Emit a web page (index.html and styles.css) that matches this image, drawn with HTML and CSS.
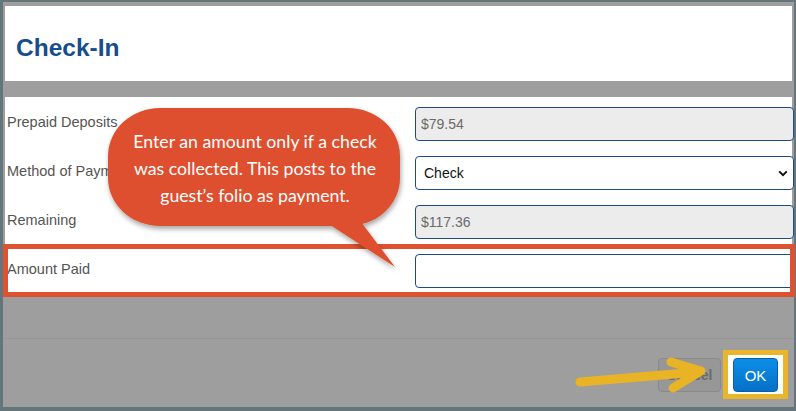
FILE: index.html
```html
<!DOCTYPE html>
<html>
<head>
<meta charset="utf-8">
<link rel="stylesheet" href="styles.css">
</head>
<body>
<div class="frame">
  <div class="header"><h1 class="title">Check-In</h1></div>
  <div class="form">
    <label class="label">Prepaid Deposits</label>
    <input class="field disabled" value="$79.54" disabled>
    <label class="label">Method of Payment</label>
    <div class="select-wrap">
      <select class="field select"><option>Check</option></select>
      <svg class="chev" width="10" height="7" viewBox="0 0 10 7"><path d="M1.2 1.4 L5 5.2 L8.8 1.4" fill="none" stroke="#111" stroke-width="2"/></svg>
    </div>
    <label class="label">Remaining</label>
    <input class="field disabled" value="$117.36" disabled>
    <label class="label">Amount Paid</label>
    <input class="field" value="">
  </div>
  <div class="footer">
    <button class="btn cancel">Cancel</button>
    <div class="highlight"><button class="btn ok">OK</button></div>
  </div>
</div>

<div class="redbox"></div>

<svg class="bubble" width="320" height="180" viewBox="0 0 320 180">
  <defs>
    <filter id="sh" x="-10%" y="-10%" width="130%" height="140%">
      <feDropShadow dx="1" dy="3" stdDeviation="2.5" flood-color="#000" flood-opacity="0.35"/>
    </filter>
  </defs>
  <g filter="url(#sh)" fill="#dd4f2d">
    <rect x="8" y="8" width="292" height="118" rx="52" ry="48"/>
    <path d="M207 110 L252 110 L295 167 Z"/>
  </g>
</svg>
<div class="bubble-text">Enter an amount only if a check<br>was collected. This posts to the<br>guest’s folio as payment.</div>

<svg class="arrow" width="150" height="50" viewBox="0 0 150 50">
  <g fill="none" stroke="#e9b326" stroke-width="9" stroke-linecap="round" stroke-linejoin="round">
    <path d="M10 32 L128 22"/>
    <path d="M101 12 L131 21 L103 38"/>
  </g>
</svg>
</body>
</html>
```

FILE: styles.css
```css
html, body {
  margin: 0;
  padding: 0;
}
body {
  width: 796px;
  height: 411px;
  overflow: hidden;
  position: relative;
  font-family: "Liberation Sans", Arial, sans-serif;
}
.frame {
  box-sizing: border-box;
  width: 796px;
  height: 411px;
  background: #9e9e9e;
  border-style: solid;
  border-color: #65757c;
  border-width: 2px 2px 4px 3px;
  display: flex;
  flex-direction: column;
}
.header {
  background: #fff;
  height: 75px;
  margin: 4px 2px 0 2px;
  padding: 30px 0 0 11px;
  box-sizing: border-box;
}
.title {
  margin: 0;
  font-size: 24.5px;
  line-height: 24px;
  font-weight: bold;
  color: #164d8b;
}
.form {
  background: #fff;
  margin: 16px 2px 0 2px;
  padding: 10px 0 4px 2px;
  display: grid;
  grid-template-columns: 408px 379px;
  row-gap: 15px;
  align-items: center;
}
.label {
  font-size: 14.5px;
  color: #555;
  padding-bottom: 4px;
  white-space: nowrap;
  overflow: hidden;
}
.field {
  box-sizing: border-box;
  width: 379px;
  height: 34px;
  border: 1px solid #1c4a85;
  border-radius: 4px;
  background: #fff;
  font-family: "Liberation Sans", Arial, sans-serif;
  font-size: 14px;
  color: #111;
  padding: 0 0 0 5px;
  margin: 0;
  outline: none;
}
.field.disabled {
  background: #ececec;
  color: #6a6a6a;
}
.select-wrap {
  position: relative;
  width: 379px;
  height: 34px;
}
.select {
  appearance: none;
  -webkit-appearance: none;
  padding-left: 8px;
}
.chev {
  position: absolute;
  right: 6px;
  top: 14px;
}
.footer {
  margin-top: 46px;
  border-top: 1px solid #969696;
  padding: 11px 6px 0 0;
  display: flex;
  justify-content: flex-end;
  align-items: center;
  gap: 2px;
}
.btn {
  font-family: "Liberation Sans", Arial, sans-serif;
  box-sizing: border-box;
  height: 34px;
  border-radius: 4px;
  padding: 0;
}
.cancel {
  width: 63px;
  background: #979797;
  border: 1px solid #8a8a8a;
  color: #6a6a6a;
  font-size: 14px;
  font-weight: bold;
}
.highlight {
  border: 5px solid #e9b52b;
  background: #fff;
  padding: 3px 5px 2px 5px;
  display: flex;
}
.ok {
  width: 45px;
  background: linear-gradient(#0c8ee9, #0670c6);
  border: 1px solid #0a5ea6;
  color: #fff;
  font-size: 15px;
}
.redbox {
  position: absolute;
  left: 3px;
  top: 244px;
  width: 792px;
  height: 53px;
  box-sizing: border-box;
  border: 5px solid #e0512f;
}
.bubble {
  position: absolute;
  left: 100px;
  top: 100px;
}
.bubble-text {
  position: absolute;
  left: 108px;
  top: 108px;
  width: 292px;
  height: 118px;
  display: flex;
  align-items: center;
  justify-content: center;
  text-align: center;
  font-family: Lato, "Open Sans", sans-serif;
  font-size: 17.7px;
  line-height: 27px;
  color: #fff;
  padding-top: 3px;
  padding-left: 2px;
  box-sizing: border-box;
  white-space: nowrap;
}
.arrow {
  position: absolute;
  left: 570px;
  top: 350px;
}
```
